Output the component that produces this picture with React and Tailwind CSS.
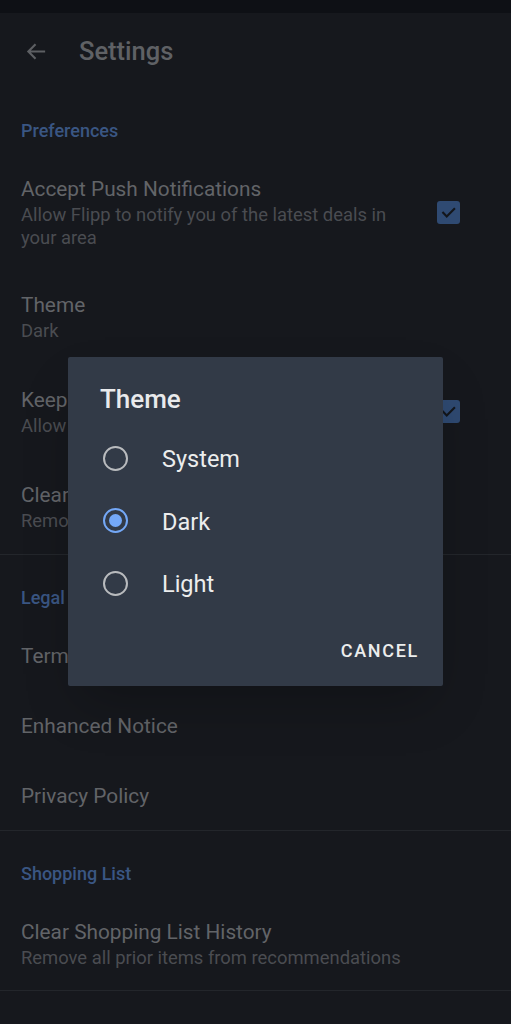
import React, { useState } from 'react';

const font = { fontFamily: 'Roboto, "Noto Sans", sans-serif' };

const Checkbox = () => (
  <div className="w-[23px] h-[23px] rounded-[3px] bg-[#2f4a72] flex items-center justify-center shrink-0 mb-[2px]">
    <svg width="17" height="17" viewBox="0 0 24 24" fill="none">
      <path d="M4.5 12.5l5 5L20 7" stroke="#13161b" strokeWidth="3" strokeLinecap="square" />
    </svg>
  </div>
);

const SectionHeader = ({ children }) => (
  <div className="pt-[33px] pb-[12px] px-[21px] text-[18px] leading-[20px] font-medium text-[#3a5683]">
    {children}
  </div>
);

const Row = ({ title, subtitle, checked, pb = 'pb-[22px]' }) => (
  <div className={`flex items-center pl-[21px] pr-[51px] pt-[24px] ${pb}`}>
    <div className="flex-1 pr-[40px]">
      <div className="text-[20.8px] leading-[24px] text-[#626468]">{title}</div>
      <div className="mt-[2px] text-[18.4px] leading-[23px] text-[#4a4c51]">{subtitle}</div>
    </div>
    {checked && <Checkbox />}
  </div>
);

const LinkRow = ({ title }) => (
  <div className="h-[70px] pt-[4px] flex items-center px-[21px] text-[20.8px] text-[#626468]">{title}</div>
);

const Radio = ({ selected }) =>
  selected ? (
    <div className="w-[25px] h-[25px] rounded-full border-[2.5px] border-[#74a8f7] flex items-center justify-center shrink-0">
      <div className="w-[13px] h-[13px] rounded-full bg-[#74a8f7]" />
    </div>
  ) : (
    <div className="w-[25px] h-[25px] rounded-full border-[2.5px] border-[#b9bbbe] shrink-0" />
  );

export default function App() {
  const [theme, setTheme] = useState('Dark');
  const options = ['System', 'Dark', 'Light'];

  return (
    <div className="relative min-h-screen bg-[#16181d] overflow-hidden" style={font}>
      <div className="h-[13px] bg-[#0e1015]" />

      {/* Toolbar */}
      <div className="h-[75px] flex items-center">
        <div className="w-[79px] pl-[25px] pt-[1px]">
          <svg width="23" height="23" viewBox="0 0 24 24" fill="none">
            <path d="M21 12H4M11 4.5L3.5 12 11 19.5" stroke="#5d5f63" strokeWidth="2.2" />
          </svg>
        </div>
        <div className="text-[25.5px] font-medium text-[#5f6165] pt-[2px]">Settings</div>
      </div>

      <SectionHeader>Preferences</SectionHeader>
      <Row
        title="Accept Push Notifications"
        subtitle="Allow Flipp to notify you of the latest deals in your area"
        checked
        pb="pb-[20px]"
      />
      <Row title="Theme" subtitle="Dark" />
      <Row title="Keep Me Signed In" subtitle="Allow Flipp to remember you" checked />
      <Row title="Clear Search History" subtitle="Remove all prior searches" />
      <div className="h-px bg-[#23262b]" />

      <SectionHeader>Legal</SectionHeader>
      <LinkRow title="Terms of Service" />
      <LinkRow title="Enhanced Notice" />
      <LinkRow title="Privacy Policy" />
      <div className="h-px bg-[#23262b]" />

      <SectionHeader>Shopping List</SectionHeader>
      <Row title="Clear Shopping List History" subtitle="Remove all prior items from recommendations" pb="pb-[21px]" />
      <div className="h-px bg-[#23262b]" />

      {/* Theme dialog */}
      <div className="absolute left-[68px] top-[357px] w-[375px] bg-[#323a47] rounded-[2px] shadow-2xl">
        <div className="pt-[26px] pl-[32px] text-[26px] leading-[32px] font-medium text-[#e9eaec]">Theme</div>
        <div className="mt-[12px]">
          {options.map((opt) => (
            <button
              key={opt}
              onClick={() => setTheme(opt)}
              className="w-full h-[62.5px] flex items-center pl-[35px] text-left"
            >
              <Radio selected={theme === opt} />
              <span className="ml-[34px] mt-[3px] text-[23.5px] text-[#eceded]">{opt}</span>
            </button>
          ))}
        </div>
        <div className="h-[71px] flex items-center justify-end pr-[24px]">
          <span className="text-[18px] font-medium tracking-[1.7px] text-[#eceded]">CANCEL</span>
        </div>
      </div>
    </div>
  );
}
